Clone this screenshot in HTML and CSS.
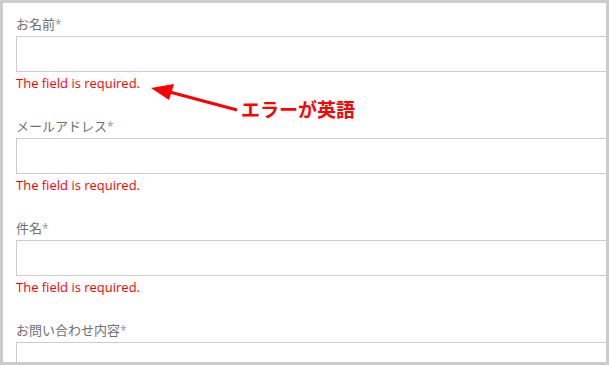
FILE: index.html
```html
<!DOCTYPE html>
<html lang="ja">
<head>
  <meta charset="UTF-8">
  <meta name="viewport" content="width=device-width, initial-scale=1">
  <title>お問い合わせ</title>
  <link rel="stylesheet" href="styles.css">
</head>
<body>
  <div class="frame">
    <form class="contact-form">
      <div class="field">
        <label>お名前<span class="req">*</span></label>
        <input type="text" class="text-input">
        <span class="error">The field is required.</span>
      </div>
      <div class="field">
        <label>メールアドレス<span class="req">*</span></label>
        <input type="text" class="text-input">
        <span class="error">The field is required.</span>
      </div>
      <div class="field">
        <label>件名<span class="req">*</span></label>
        <input type="text" class="text-input">
        <span class="error">The field is required.</span>
      </div>
      <div class="field">
        <label>お問い合わせ内容<span class="req">*</span></label>
        <textarea class="text-input textarea"></textarea>
      </div>
    </form>

    <svg class="arrow" width="609" height="365" viewBox="0 0 609 365">
      <line x1="237" y1="110" x2="166" y2="91" stroke="#ff0000" stroke-width="3.2" />
      <polygon points="151,88 174,84 169,100" fill="#ff0000" />
    </svg>
    <div class="note">エラーが英語</div>
  </div>
</body>
</html>
```

FILE: styles.css
```css
* { box-sizing: border-box; }

body {
  margin: 0;
  background: #ffffff;
}

.frame {
  position: relative;
  width: 609px;
  height: 365px;
  border: 3px solid #cccccc;
  overflow: hidden;
  background: #ffffff;
  padding: 11px 0 0 13px;
}

.contact-form {
  display: flex;
  flex-direction: column;
  gap: 24px;
}

.field {
  display: flex;
  flex-direction: column;
  align-items: flex-start;
}

.field label {
  display: block;
  height: 20px;
  font-family: "Open Sans", "Noto Sans CJK JP", sans-serif;
  font-size: 13px;
  line-height: 20px;
  color: #707070;
  margin-bottom: 2px;
}

.req {
  color: #8c9bb0;
  font-size: 12px;
}

.text-input {
  display: block;
  width: 640px;
  height: 36px;
  border: 1px solid #cccccc;
  background: #ffffff;
  margin: 0;
  padding: 0;
  font: inherit;
}

.textarea {
  height: 120px;
  resize: none;
}

.error {
  display: block;
  height: 20px;
  padding-top: 1px;
  font-family: "Open Sans", sans-serif;
  font-size: 13px;
  line-height: 20px;
  color: #ff0000;
}

.arrow {
  position: absolute;
  top: -3px;
  left: -3px;
}

.note {
  position: absolute;
  left: 238px;
  top: 93px;
  font-family: "Noto Sans CJK JP", sans-serif;
  font-weight: bold;
  font-size: 19px;
  line-height: 26px;
  color: #ff0000;
}
```
